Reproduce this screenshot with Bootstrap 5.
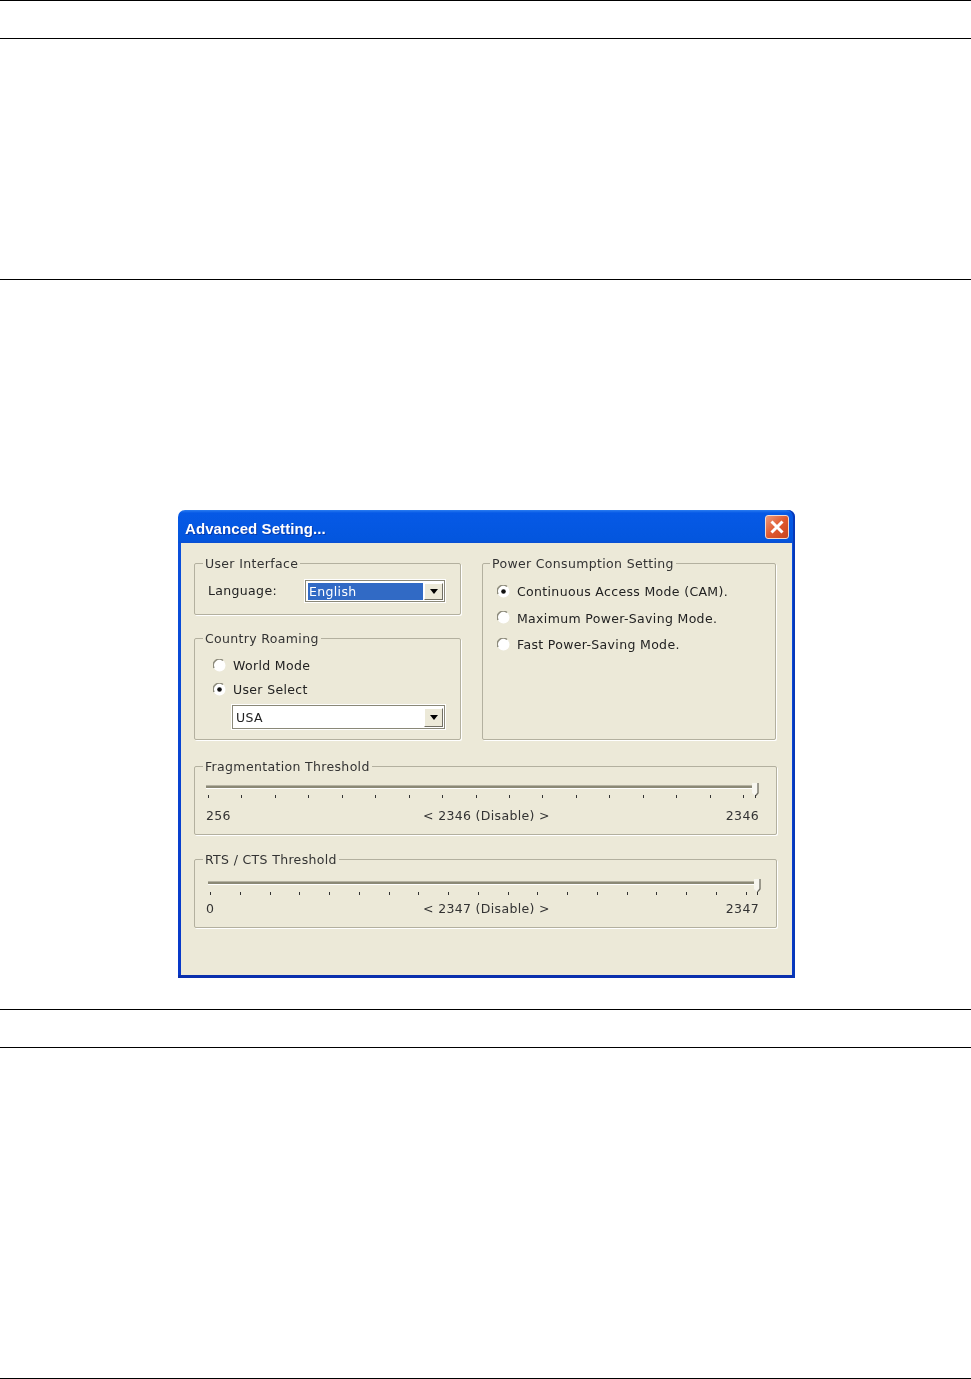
<!DOCTYPE html>
<html lang="en"><head><meta charset="utf-8"><title>Advanced Setting</title>
<link href="https://cdn.jsdelivr.net/npm/bootstrap@5.3.0/dist/css/bootstrap.min.css" rel="stylesheet">
<style>
html,body{background:#fff;margin:0}
body{height:1379px;overflow:hidden;font-family:"DejaVu Sans","Liberation Sans",sans-serif}
.rule-line{height:1px;background:#000}
.gap-a{height:37px}.gap-b{height:240px}.gap-c{height:230px}.gap-d{height:31px}.gap-e{height:37px}.gap-f{height:330px}
.xp-window{width:617px;height:468px;margin-left:178px;background:linear-gradient(#2a7cf0,#0659e6 3px,#0356de 30px,#0a4fd2 33px,#0a50dc 33px,#0838c8 100%);border-radius:7px 7px 0 0;padding:0 3px 3px;color:#222;font-size:12.5px;line-height:16px;letter-spacing:.34px;box-shadow:inset -2px 0 0 #0738b8,inset 0 -3px 0 #0a30ad;filter:blur(.3px)}
.xp-title{height:33px;padding:1px 3px 0 4px;color:#fff}
.xp-title-text{font:700 15px/18px "Liberation Sans",sans-serif;text-shadow:1px 1px 0 #0a3aa8;letter-spacing:.08px;padding-top:3px}
.xp-close{width:24px;height:24px;border:1px solid #f3d8cc;border-radius:3px;background:linear-gradient(135deg,#ec9a7c,#e0592f 50%,#c8441c)}
.xp-client{height:432px;background:#ece9d8;padding:11px 15px 0 13px;display:grid;grid-template-columns:267px 294px;column-gap:21px;grid-template-rows:61px 126px 94px 94px;align-content:start}
.xp-group{margin:0;border:1px solid #b3b09f;box-shadow:1px 1px 0 #fff;padding:0 10px;min-width:0;border-radius:2px}
.xp-group legend{float:none;width:auto;font-size:12.5px;line-height:16px;margin:0 0 0 -2px;padding:2px 2px 0 2px;color:#333}
.span-ui{height:61px}.span-country{grid-row:2;height:111px;margin-top:14px}.span-power{grid-column:2;grid-row:1/3;height:186px;width:294px}
.span-power legend{margin-left:-3px}
.span-frag,.span-rts{grid-column:1/3;width:583px}.span-frag{margin-top:16px;height:78px}.span-rts{margin-top:15px;height:78px}
.lang-label{width:100px;flex:none;padding-left:3px}
.xp-combo{background:#fff;border:1px solid #8a8878;box-shadow:0 0 0 1px #fff;padding:2px 1px 1px 2px;flex:none}
.combo-lang{width:140px;height:22px}
.combo-country{width:213px;height:24px;margin:3px 0 0 27px}
.combo-sel{background:#316ac5;color:#fff;padding-left:1px;margin-right:1px;line-height:18px}
.combo-plain{padding-left:1px;line-height:19px}
.combo-arrow{width:19px;background:#ece9d8;border:1px solid;border-color:#fff #716f64 #716f64 #fff}
.combo-arrow::after{content:"";border:4px solid transparent;border-top:5px solid #000;border-bottom:0}
.radio-row{gap:7px;line-height:16px}
.radio-row svg{flex:none;margin-bottom:2px}
.country-rows{padding:7px 0 0 8px}.country-rows .radio-row{height:24px}
.power-rows{padding:7px 0 0 4px}.power-rows .radio-row{height:26.5px}
.slider-box{position:relative;height:16px;margin-top:7px}
.track{position:absolute;top:3px;height:4px;background:#8b8976;border-bottom:1px solid #fff;border-top:1px solid #b5b2a2}
.thumb{position:absolute;top:1px}
.tick-row{position:absolute;top:13px;height:3px;display:flex;justify-content:space-between}
.tick-row i{display:block;width:1px;height:3px;background:#333}
.tick-end{position:absolute;top:13px;width:1px;height:3px;background:#333}
.frag .track{left:1px;width:549px}.frag .thumb{left:547px}.frag .tick-row{left:3px;width:536px}.frag .tick-end{left:550px}
.rts .slider-box{margin-top:10px}
.rts .track{left:3px;width:549px}.rts .thumb{left:549px}.rts .tick-row{left:5px;width:537px;top:14px}.rts .tick-end{left:552px;top:14px}
.value-row{display:grid;grid-template-columns:217px 128px 1fr;margin-top:10px;padding:0 7px 0 1px;color:#333}
.rts .value-row{margin-top:7px}
</style></head><body>
<svg width="0" height="0" class="d-block"><defs>
<symbol id="radio-off" viewBox="0 0 13 13"><circle cx="6.5" cy="6.5" r="6" fill="#fff"/><path d="M1 9A6 6 0 0 1 10 1.5" fill="none" stroke="#8d8b7c" stroke-width="1.5"/></symbol>
<symbol id="radio-on" viewBox="0 0 13 13"><circle cx="6.5" cy="6.5" r="6" fill="#fff"/><path d="M1 9A6 6 0 0 1 10 1.5" fill="none" stroke="#8d8b7c" stroke-width="1.5"/><circle cx="6.5" cy="6.5" r="2.300" fill="#111"/></symbol>
<symbol id="slider-thumb" viewBox="0 0 7 13"><path d="M0 0h6v10l-2.500 3L0 10z" fill="#f7f6ef"/><path d="M6 0v10l-2.500 3" fill="none" stroke="#6f6d62" stroke-width="1.300"/></symbol>
</defs></svg>
<div class="rule-line"></div><div class="gap-a"></div><div class="rule-line"></div><div class="gap-b"></div><div class="rule-line"></div><div class="gap-c"></div>
<div class="xp-window">
<div class="xp-title d-flex justify-content-between align-items-center">
<div class="xp-title-text">Advanced Setting...</div>
<div class="xp-close d-flex align-items-center justify-content-center"><svg width="16" height="16" viewBox="0 0 16 16"><path d="M2.500 2.500l11 11M13.500 2.500l-11 11" stroke="#fff" stroke-width="3"/></svg></div>
</div>
<div class="xp-client">
<fieldset class="xp-group span-ui"><legend>User Interface</legend>
<div class="d-flex align-items-center mt-2"><span class="lang-label">Language:</span><div class="xp-combo combo-lang d-flex"><div class="combo-sel flex-grow-1">English</div><div class="combo-arrow d-flex align-items-center justify-content-center"></div></div></div>
</fieldset>
<fieldset class="xp-group span-power"><legend>Power Consumption Setting</legend>
<div class="power-rows">
<div class="radio-row d-flex align-items-center"><svg width="13" height="13"><use href="#radio-on"/></svg><span>Continuous Access Mode (CAM).</span></div>
<div class="radio-row d-flex align-items-center"><svg width="13" height="13"><use href="#radio-off"/></svg><span>Maximum Power-Saving Mode.</span></div>
<div class="radio-row d-flex align-items-center"><svg width="13" height="13"><use href="#radio-off"/></svg><span>Fast Power-Saving Mode.</span></div>
</div></fieldset>
<fieldset class="xp-group span-country"><legend>Country Roaming</legend>
<div class="country-rows">
<div class="radio-row d-flex align-items-center"><svg width="13" height="13"><use href="#radio-off"/></svg><span>World Mode</span></div>
<div class="radio-row d-flex align-items-center"><svg width="13" height="13"><use href="#radio-on"/></svg><span>User Select</span></div>
</div>
<div class="xp-combo combo-country d-flex"><div class="combo-plain flex-grow-1">USA</div><div class="combo-arrow d-flex align-items-center justify-content-center"></div></div>
</fieldset>
<fieldset class="xp-group span-frag frag"><legend>Fragmentation Threshold</legend>
<div class="slider-box"><div class="track"></div><svg class="thumb" width="7" height="13"><use href="#slider-thumb"/></svg>
<div class="tick-row"><i></i><i></i><i></i><i></i><i></i><i></i><i></i><i></i><i></i><i></i><i></i><i></i><i></i><i></i><i></i><i></i><i></i></div><div class="tick-end"></div></div>
<div class="value-row"><span>256</span><span>&lt; 2346 (Disable) &gt;</span><span class="text-end">2346</span></div>
</fieldset>
<fieldset class="xp-group span-rts rts"><legend>RTS / CTS Threshold</legend>
<div class="slider-box"><div class="track"></div><svg class="thumb" width="7" height="13"><use href="#slider-thumb"/></svg>
<div class="tick-row"><i></i><i></i><i></i><i></i><i></i><i></i><i></i><i></i><i></i><i></i><i></i><i></i><i></i><i></i><i></i><i></i><i></i><i></i><i></i></div><div class="tick-end"></div></div>
<div class="value-row"><span>0</span><span>&lt; 2347 (Disable) &gt;</span><span class="text-end">2347</span></div>
</fieldset>
</div></div>
<div class="gap-d"></div><div class="rule-line"></div><div class="gap-e"></div><div class="rule-line"></div><div class="gap-f"></div><div class="rule-line"></div>
<script src="https://cdn.jsdelivr.net/npm/bootstrap@5.3.0/dist/js/bootstrap.bundle.min.js"></script>
</body></html>
